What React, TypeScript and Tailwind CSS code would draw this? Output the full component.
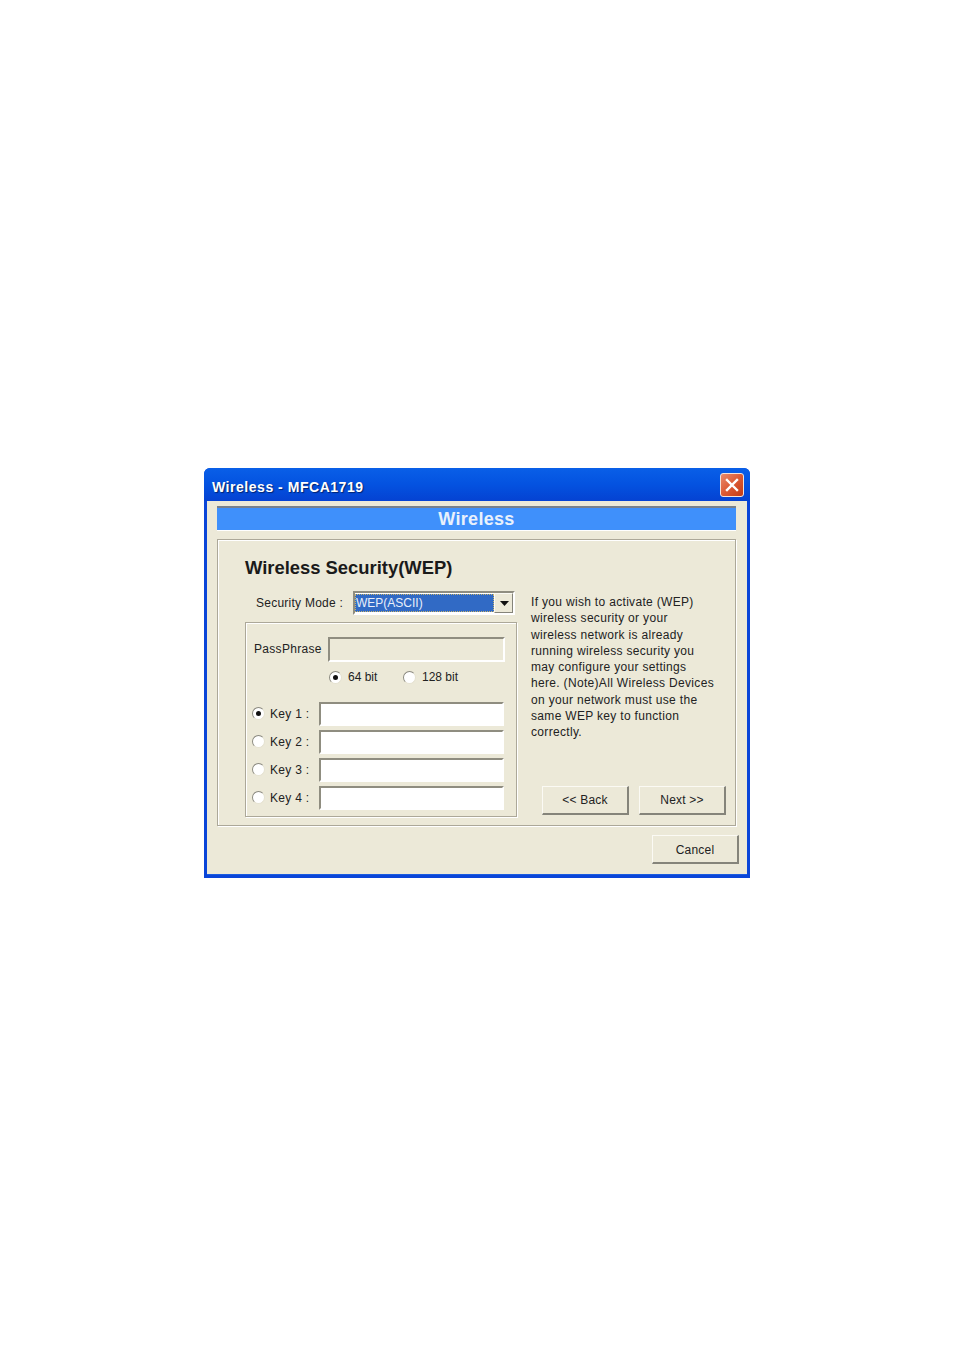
const sans = { fontFamily: '"Liberation Sans", Arial, sans-serif' };

function Radio({ checked }: { checked?: boolean }) {
  return (
    <span className="flex h-[13px] w-[13px] shrink-0 items-center justify-center rounded-full border border-[#8a897f] border-b-[#e4e1d0] border-r-[#e4e1d0] bg-white">
      {checked && <span className="h-[5px] w-[5px] rounded-full bg-[#111]" />}
    </span>
  );
}

function Field({ className, bg }: { className: string; bg: string }) {
  return (
    <div className={`shrink-0 border-2 border-[#8f8d80] border-b-white border-r-white ${bg} ${className}`} />
  );
}

function XpButton({ label, className }: { label: string; className: string }) {
  return (
    <button className={`flex shrink-0 items-center justify-center border border-[#fbfaf4] border-b-2 border-r-2 border-b-[#85847a] border-r-[#85847a] pt-[1px] text-[12px] tracking-[0.2px] text-[#222] ${className}`}>
      {label}
    </button>
  );
}

function KeyRow({ n, checked }: { n: number; checked?: boolean }) {
  return (
    <div className="flex h-[24px] items-center">
      <span className="-mt-[2px]">
        <Radio checked={checked} />
      </span>
      <span className="ml-[5px] w-[49px] text-[12px] tracking-[0.3px] text-[#222]">Key {n} :</span>
      <Field className="h-[24px] w-[185px]" bg="bg-white" />
    </div>
  );
}

export default function App() {
  return (
    <div className="h-[1350px] w-[954px] bg-white pl-[204px] pt-[468px]" style={sans}>
      <div className="flex h-[410px] w-[546px] flex-col rounded-t-[6px] bg-[#0a45d8]">
        {/* Title bar */}
        <div className="flex h-[33px] shrink-0 items-center justify-between rounded-t-[6px] bg-gradient-to-b from-[#0a5fe8] via-[#0452e0] to-[#0542d2] pl-[8px] pr-[6px]">
          <span className="pt-[6px] text-[14px] font-bold tracking-[0.53px] text-white" style={{ textShadow: "1px 1px 1px #02236e" }}>
            Wireless - MFCA1719
          </span>
          <span className="flex h-[24px] w-[24px] items-center justify-center rounded-[3px] border border-[#f3e3dc] bg-gradient-to-br from-[#e98a6c] via-[#dc5a33] to-[#c23a14]">
            <svg width="14" height="14" viewBox="0 0 14 14">
              <path d="M2 2 L12 12 M12 2 L2 12" stroke="#fff" strokeWidth="2.4" strokeLinecap="square" />
            </svg>
          </span>
        </div>

        {/* Body */}
        <div className="mx-[3px] mb-[3px] flex-1 border-b border-b-[#1a5be0] bg-[#ece9d8] pl-[10px] pr-[11px] pt-[5px]">
          <div className="flex h-[25px] items-center justify-center border-t-2 border-b border-[#77808c] border-b-white bg-[#3f90fb] text-[18px] font-bold tracking-[0.3px] text-[#e8f1fc]">
            Wireless
          </div>

          <div className="mt-[8px] h-[287px] border border-[#aca899] pl-[27px] pt-[16px] shadow-[inset_1px_1px_0_#fff,1px_1px_0_#fff]">
            <h1 className="h-[24px] text-[18.4px] font-bold leading-[24px] text-[#1a1a1a]">
              Wireless Security(WEP)
            </h1>

            <div className="mt-[11px] flex">
              {/* Left column */}
              <div className="w-[272px] shrink-0">
                <div className="flex h-[24px] items-center">
                  <span className="ml-[11px] w-[97px] text-[12px] tracking-[0.25px] text-[#222]">Security Mode :</span>
                  <div className="flex h-[24px] w-[162px] items-center border-2 border-[#8f8d80] border-b-white border-r-white bg-white">
                    <span className="flex h-[18px] flex-1 items-center border border-dotted border-[#c9b36a] bg-[#316ac5] text-[12px] text-[#e8eefa]">
                      WEP(ASCII)
                    </span>
                    <span className="flex h-[20px] w-[19px] items-center justify-center border border-[#fbfaf4] border-b-[#85847a] border-r-[#85847a] bg-[#ece9d8] pl-[1px]">
                      <svg width="9" height="5" viewBox="0 0 9 5">
                        <path d="M0 0 H9 L4.5 5 Z" fill="#111" />
                      </svg>
                    </span>
                  </div>
                </div>

                {/* Key group */}
                <div className="mt-[7px] h-[195px] border border-[#aca899] pl-[6px] pt-[14px] shadow-[inset_1px_1px_0_#fff,1px_1px_0_#fff]">
                  <div className="flex h-[25px] items-center">
                    <span className="ml-[2px] w-[74px] pb-[2px] text-[12px] tracking-[0.3px] text-[#222]">PassPhrase</span>
                    <Field className="h-[25px] w-[177px]" bg="bg-[#ece9d8]" />
                  </div>
                  <div className="ml-[77px] mt-[7px] flex h-[16px] items-center text-[12px] text-[#222]">
                    <Radio checked />
                    <span className="ml-[6px] w-[55px]">64 bit</span>
                    <Radio />
                    <span className="ml-[6px]">128 bit</span>
                  </div>
                  <div className="mt-[17px] flex flex-col gap-[4px]">
                    <KeyRow n={1} checked />
                    <KeyRow n={2} />
                    <KeyRow n={3} />
                    <KeyRow n={4} />
                  </div>
                </div>
              </div>

              {/* Right column */}
              <div className="ml-[14px] w-[205px] shrink-0">
                <p className="mt-[3px] text-[12px] leading-[16.3px] tracking-[0.32px] text-[#222]">
                  If you wish to activate (WEP)
                  <br />
                  wireless security or your
                  <br />
                  wireless network is already
                  <br />
                  running wireless security you
                  <br />
                  may configure your settings
                  <br />
                  here. (Note)All Wireless Devices
                  <br />
                  on your network must use the
                  <br />
                  same WEP key to function
                  <br />
                  correctly.
                </p>
                <div className="ml-[11px] mt-[45px] flex gap-[10px]">
                  <XpButton label="<< Back" className="h-[29px] w-[87px]" />
                  <XpButton label="Next >>" className="h-[29px] w-[87px]" />
                </div>
              </div>
            </div>
          </div>

          <div className="mt-[9px] flex justify-end">
            <XpButton label="Cancel" className="mr-[-3px] h-[29px] w-[87px]" />
          </div>
        </div>
      </div>
    </div>
  );
}
